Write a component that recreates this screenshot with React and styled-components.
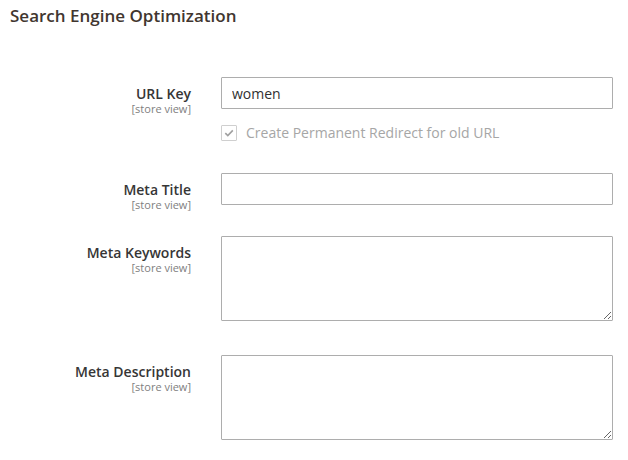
import React from 'react';
import styled, { createGlobalStyle } from 'styled-components';

const GlobalStyle = createGlobalStyle`
    body {
        margin: 0;
        padding: 0;
        background-color: #fff;
        font-family: "Open Sans", "Liberation Sans", sans-serif;
        color: #303030;
    }
`;

const Page = styled.div`
    width: 628px;
`;

const Title = styled.h2`
    margin: 0;
    padding: 6px 10px 0;
    font-size: 17px;
    font-weight: 600;
    line-height: 20px;
    color: #41362f;
`;

const Form = styled.div`
    margin-top: 51px;
`;

const Row = styled.div`
    display: grid;
    grid-template-columns: 191px 392px;
    column-gap: 30px;
    align-items: start;
    margin-bottom: ${p => p.$gap || 0}px;
`;

const Label = styled.label`
    display: block;
    text-align: right;
    padding-top: 9px;
    font-size: 14px;
    font-weight: 600;
    line-height: 16px;
    color: #363636;
`;

const Scope = styled.span`
    display: block;
    font-size: 11px;
    font-weight: 400;
    line-height: 14px;
    color: #808080;
`;

const Control = styled.div`
    display: flex;
    flex-direction: column;
`;

const TextInput = styled.input`
    box-sizing: border-box;
    width: 100%;
    height: 32px;
    margin: 0;
    padding: 0 10px;
    border: 1px solid #adadad;
    border-radius: 1px;
    font-family: "Open Sans", "Liberation Sans", sans-serif;
    font-size: 14px;
    color: #303030;
    outline: none;
`;

const TextArea = styled.textarea`
    box-sizing: border-box;
    display: block;
    width: 100%;
    height: 85px;
    margin: 0;
    padding: 6px 10px;
    border: 1px solid #adadad;
    border-radius: 1px;
    font-family: "Open Sans", "Liberation Sans", sans-serif;
    font-size: 14px;
    color: #303030;
    resize: vertical;
    outline: none;
`;

const CheckRow = styled.div`
    display: flex;
    align-items: center;
    gap: 9px;
    margin-top: 16px;
    height: 16px;
    font-size: 14px;
    line-height: 16px;
    color: #a6a6a6;
`;

const CheckBox = styled.span`
    box-sizing: border-box;
    display: flex;
    align-items: center;
    justify-content: center;
    width: 16px;
    height: 16px;
    border: 1px solid #cfcfcf;
    border-radius: 1px;
    background-color: #fff;
`;

const fields = [
    { label: 'Meta Title', type: 'input', gap: 24 },
    { label: 'Meta Keywords', type: 'area', gap: 34 },
    { label: 'Meta Description', type: 'area', gap: 0 },
];

const App = () => {
    return (
        <>
            <GlobalStyle />
            <Page>
                <Title>Search Engine Optimization</Title>
                <Form>
                    <Row $gap={32}>
                        <Label>
                            URL Key
                            <Scope>[store view]</Scope>
                        </Label>
                        <Control>
                            <TextInput defaultValue="women" />
                            <CheckRow>
                                <CheckBox>
                                    <svg width="12" height="12" viewBox="0 0 12 12">
                                        <path d="M2.3 6.2 L4.8 8.6 L9.8 3.4" fill="none" stroke="#a0a0a0" strokeWidth="1.6" />
                                    </svg>
                                </CheckBox>
                                Create Permanent Redirect for old URL
                            </CheckRow>
                        </Control>
                    </Row>
                    {fields.map(f => (
                        <Row key={f.label} $gap={f.gap}>
                            <Label>
                                {f.label}
                                <Scope>[store view]</Scope>
                            </Label>
                            <Control>
                                {f.type === 'input' ? <TextInput /> : <TextArea />}
                            </Control>
                        </Row>
                    ))}
                </Form>
            </Page>
        </>
    );
};

export default App;
